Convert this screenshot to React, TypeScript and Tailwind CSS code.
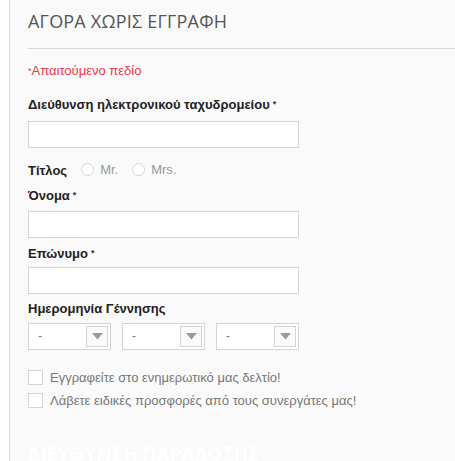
import React from 'react';

function Req() {
  return <sup className="ml-[3px] text-[9px] font-bold text-[#333] relative -top-[2px]">*</sup>;
}

function TextInput() {
  return <div className="h-[27px] w-[271px] border border-[#d4d4d4] bg-white" />;
}

function DateSelect() {
  return (
    <div className="flex h-[27px] w-[83px] items-center justify-between border border-[#d4d4d4] bg-white pl-[9px] pr-[2px]">
      <span className="text-[12px] text-[#777]">-</span>
      <div className="flex h-[21px] w-[22px] items-center justify-center border border-[#d4d4d4] bg-[#fafafa]">
        <svg width="11" height="7" viewBox="0 0 11 7">
          <path d="M0 0 H11 L5.5 6.5 Z" fill="#9a9a9a" />
        </svg>
      </div>
    </div>
  );
}

function Radio({ label }: { label: string }) {
  return (
    <label className="flex items-center gap-[6px]">
      <span className="h-[13px] w-[13px] rounded-full border border-[#d4d4d4] bg-white" />
      <span className="text-[13px] text-[#999]">{label}</span>
    </label>
  );
}

function Check({ label }: { label: string }) {
  return (
    <label className="flex items-center gap-[7px]">
      <span className="h-[15px] w-[15px] border border-[#d4d4d4] bg-white" />
      <span className="text-[13px] text-[#777]">{label}</span>
    </label>
  );
}

export default function App() {
  return (
    <div className="h-[461px] w-[455px] overflow-hidden bg-white pl-[9px] font-['Liberation_Sans',Arial,sans-serif]">
      <div className="h-full border-l border-[#dcdcdc] bg-[#fafafa] pl-[18px]">
        <h2 className="pt-[8px] font-['Open_Sans',sans-serif] text-[18px] leading-[26px] tracking-[0.2px] text-[#555]">
          ΑΓΟΡΑ ΧΩΡΙΣ ΕΓΓΡΑΦΗ
        </h2>
        <div className="mt-[14px] h-px bg-[#d8d8d8]" />

        <p className="mt-[14px] text-[13px] leading-[16px] text-[#e8394a]">
          <sup className="text-[9px] relative -top-[1px]">*</sup>Απαιτούμενο πεδίο
        </p>

        <div className="mt-[18px] text-[13px] font-bold leading-[16px] text-[#222]">
          Διεύθυνση ηλεκτρονικού ταχυδρομείου<Req />
        </div>
        <div className="mt-[8px]">
          <TextInput />
        </div>

        <div className="mt-[11px] flex items-center gap-[14px]">
          <span className="text-[13px] font-bold text-[#222] relative top-[2px]">Τίτλος</span>
          <div className="flex items-center gap-[14px] relative top-[1px]">
            <Radio label="Mr." />
            <Radio label="Mrs." />
          </div>
        </div>

        <div className="mt-[9px] text-[13px] font-bold leading-[16px] text-[#222]">
          Όνομα<Req />
        </div>
        <div className="mt-[7px]">
          <TextInput />
        </div>

        <div className="mt-[8px] text-[13px] font-bold leading-[16px] text-[#222]">
          Επώνυμο<Req />
        </div>
        <div className="mt-[5px]">
          <TextInput />
        </div>

        <div className="mt-[7px] text-[13px] font-bold leading-[16px] text-[#222]">
          Ημερομηνία Γέννησης
        </div>
        <div className="mt-[6px] flex gap-[11px]">
          <DateSelect />
          <DateSelect />
          <DateSelect />
        </div>

        <div className="mt-[18px] flex flex-col gap-[4px]">
          <Check label="Εγγραφείτε στο ενημερωτικό μας δελτίο!" />
          <Check label="Λάβετε ειδικές προσφορές από τους συνεργάτες μας!" />
        </div>

        <h2 className="mt-[30px] font-['Open_Sans',sans-serif] text-[19px] font-bold leading-[26px] text-white">
          ΔΙΕΥΘΥΝΣΗ ΠΑΡΑΔΟΣΗΣ
        </h2>
      </div>
    </div>
  );
}
